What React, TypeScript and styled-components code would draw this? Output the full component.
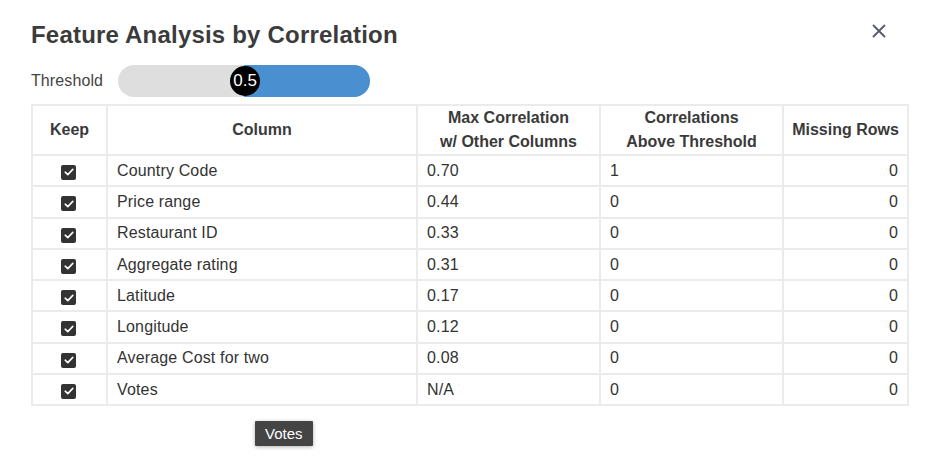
import styled, { createGlobalStyle } from 'styled-components'

const rows = [
  { name: 'Country Code', max: '0.70', above: '1', missing: '0' },
  { name: 'Price range', max: '0.44', above: '0', missing: '0' },
  { name: 'Restaurant ID', max: '0.33', above: '0', missing: '0' },
  { name: 'Aggregate rating', max: '0.31', above: '0', missing: '0' },
  { name: 'Latitude', max: '0.17', above: '0', missing: '0' },
  { name: 'Longitude', max: '0.12', above: '0', missing: '0' },
  { name: 'Average Cost for two', max: '0.08', above: '0', missing: '0' },
  { name: 'Votes', max: 'N/A', above: '0', missing: '0' },
]

export default function App() {
  const value = 0.5
  return (
    <>
      <GlobalStyle />
      <Modal>
        <Header>
          <Title>Feature Analysis by Correlation</Title>
          <CloseButton aria-label="close">
            <svg width="14" height="14" viewBox="0 0 14 14">
              <path d="M1.5 1.5 L12.5 12.5 M12.5 1.5 L1.5 12.5" stroke="#555a66" strokeWidth="1.8" strokeLinecap="round" />
            </svg>
          </CloseButton>
        </Header>
        <ThresholdRow>
          <Label>Threshold</Label>
          <Track>
            <Fill style={{ width: `${(1 - value) * 100}%` }} />
            <Thumb style={{ left: `${value * 100}%` }}>{value}</Thumb>
          </Track>
        </ThresholdRow>
        <Table>
          <colgroup>
            <col style={{ width: 75 }} />
            <col style={{ width: 310 }} />
            <col style={{ width: 183 }} />
            <col style={{ width: 183 }} />
            <col style={{ width: 125 }} />
          </colgroup>
          <thead>
            <tr>
              <Th>Keep</Th>
              <Th>Column</Th>
              <Th>
                Max Correlation
                <br />
                w/ Other Columns
              </Th>
              <Th>
                Correlations
                <br />
                Above Threshold
              </Th>
              <Th>Missing Rows</Th>
            </tr>
          </thead>
          <tbody>
            {rows.map((r) => (
              <tr key={r.name}>
                <Td $align="center">
                  <Check>
                    <svg width="10" height="8" viewBox="0 0 10 8">
                      <path d="M1.2 4.2 L3.8 6.6 L8.8 1.4" fill="none" stroke="#fff" strokeWidth="1.6" strokeLinecap="round" strokeLinejoin="round" />
                    </svg>
                  </Check>
                </Td>
                <Td>{r.name}</Td>
                <Td>{r.max}</Td>
                <Td>{r.above}</Td>
                <Td $align="right">{r.missing}</Td>
              </tr>
            ))}
          </tbody>
        </Table>
        <Tooltip>Votes</Tooltip>
      </Modal>
    </>
  )
}

const GlobalStyle = createGlobalStyle`
  body {
    margin: 0;
    background: #fff;
    font-family: 'Liberation Sans', Arial, sans-serif;
    color: #333;
  }
`

const Modal = styled.div`
  position: relative;
  width: 925px;
  height: 456px;
  box-sizing: border-box;
  padding: 18px 18px 0 31px;
`

const Header = styled.div`
  display: flex;
  justify-content: space-between;
  align-items: flex-start;
`

const Title = styled.h1`
  margin: 0;
  font-size: 24px;
  line-height: 34px;
  font-weight: 700;
  color: #3b3b3b;
  letter-spacing: 0.2px;
`

const CloseButton = styled.button`
  border: none;
  background: none;
  padding: 0;
  margin: 6px 21px 0 0;
  width: 14px;
  height: 14px;
  cursor: pointer;
`

const ThresholdRow = styled.div`
  display: flex;
  align-items: center;
  gap: 15px;
  margin-top: 13px;
  height: 32px;
`

const Label = styled.span`
  font-size: 16px;
  color: #444;
  letter-spacing: 0.1px;
`

const Track = styled.div`
  position: relative;
  width: 252px;
  height: 32px;
  border-radius: 16px;
  background: #dedede;
`

const Fill = styled.div`
  position: absolute;
  right: 0;
  top: 0;
  bottom: 0;
  border-radius: 0 16px 16px 0;
  background: #4a8fd0;
`

const Thumb = styled.div`
  position: absolute;
  top: 1px;
  width: 30px;
  height: 30px;
  margin-left: -14px;
  border-radius: 50%;
  background: #000;
  color: #fff;
  font-size: 17px;
  display: flex;
  align-items: center;
  justify-content: center;
`

const Table = styled.table`
  margin-top: 7px;
  width: 876px;
  border-collapse: collapse;
  table-layout: fixed;
  font-size: 16px;
  color: #333;
  border: 2px solid #ebebeb;
`

const Th = styled.th`
  height: 49px;
  padding: 0 8px;
  border: 2px solid #ebebeb;
  font-weight: 700;
  line-height: 24px;
  color: #3a3a3a;
  text-align: center;
  box-sizing: border-box;
`

const Td = styled.td<{ $align?: string }>`
  height: 31.3px;
  padding: 0 9px;
  border: 2px solid #ebebeb;
  text-align: ${(p) => p.$align || 'left'};
  box-sizing: border-box;
  line-height: 18px;
  letter-spacing: 0.15px;
`

const Check = styled.span`
  display: inline-flex;
  align-items: center;
  justify-content: center;
  width: 15px;
  height: 15px;
  border-radius: 2px;
  background: #333;
  vertical-align: middle;
  position: relative;
  top: 1px;
  left: -1px;
`

const Tooltip = styled.div`
  position: absolute;
  left: 255px;
  top: 421px;
  padding: 4px 10px;
  background: #444;
  color: #fff;
  font-size: 15px;
  line-height: 17px;
  border-radius: 1px;
  box-shadow: 0 1px 4px rgba(0, 0, 0, 0.3);
`
